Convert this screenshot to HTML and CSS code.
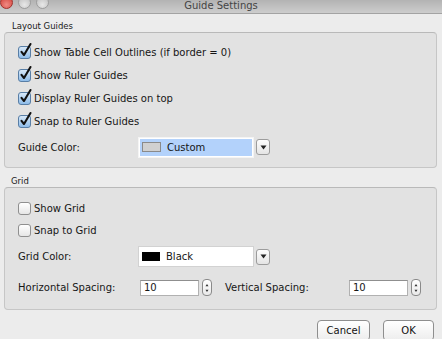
FILE: index.html
```html
<!DOCTYPE html>
<html>
<head>
<meta charset="utf-8">
<link rel="stylesheet" href="styles.css">
</head>
<body>
<div class="window">
  <div class="titlebar">
    <div class="lights">
      <span class="light red"></span>
      <span class="light"></span>
      <span class="light"></span>
    </div>
    <div class="title">Guide Settings</div>
    <div></div>
  </div>

  <div class="group-label">Layout Guides</div>
  <div class="panel panel-layout">
    <label class="row check-row"><span class="cb on"><svg viewBox="0 0 14 14" width="14" height="14"><path d="M3.5 6.8 L6 10 L12.5 -1" fill="none" stroke="#111" stroke-width="2.1" stroke-linecap="round" stroke-linejoin="round"/></svg></span>Show Table Cell Outlines (if border = 0)</label>
    <label class="row check-row"><span class="cb on"><svg viewBox="0 0 14 14" width="14" height="14"><path d="M3.5 6.8 L6 10 L12.5 -1" fill="none" stroke="#111" stroke-width="2.1" stroke-linecap="round" stroke-linejoin="round"/></svg></span>Show Ruler Guides</label>
    <label class="row check-row"><span class="cb on"><svg viewBox="0 0 14 14" width="14" height="14"><path d="M3.5 6.8 L6 10 L12.5 -1" fill="none" stroke="#111" stroke-width="2.1" stroke-linecap="round" stroke-linejoin="round"/></svg></span>Display Ruler Guides on top</label>
    <label class="row check-row"><span class="cb on"><svg viewBox="0 0 14 14" width="14" height="14"><path d="M3.5 6.8 L6 10 L12.5 -1" fill="none" stroke="#111" stroke-width="2.1" stroke-linecap="round" stroke-linejoin="round"/></svg></span>Snap to Ruler Guides</label>
    <div class="row color-row first-color">
      <span class="lbl">Guide Color:</span>
      <div class="field sel"><span class="inner"><span class="swatch custom"></span>Custom</span></div>
      <span class="popbtn"><svg viewBox="0 0 7 5" width="7" height="5"><path d="M0.5 0.5 H6.5 L3.5 4.5 Z" fill="#222"/></svg></span>
    </div>
  </div>

  <div class="group-label grid-label">Grid</div>
  <div class="panel panel-grid">
    <label class="row check-row short"><span class="cb"></span>Show Grid</label>
    <label class="row check-row short"><span class="cb"></span>Snap to Grid</label>
    <div class="row color-row grid-color">
      <span class="lbl">Grid Color:</span>
      <div class="field"><span class="inner"><span class="swatch black"></span>Black</span></div>
      <span class="popbtn"><svg viewBox="0 0 7 5" width="7" height="5"><path d="M0.5 0.5 H6.5 L3.5 4.5 Z" fill="#222"/></svg></span>
    </div>
    <div class="row spacing-row">
      <span class="lbl hlbl">Horizontal Spacing:</span>
      <span class="num">10</span>
      <span class="stepper"><svg viewBox="0 0 9 16" width="9" height="16"><path d="M2.8 6 L4.5 3.6 L6.2 6 Z M2.8 10 L4.5 12.4 L6.2 10 Z" fill="#333"/></svg></span>
      <span class="lbl vlbl">Vertical Spacing:</span>
      <span class="num">10</span>
      <span class="stepper"><svg viewBox="0 0 9 16" width="9" height="16"><path d="M2.8 6 L4.5 3.6 L6.2 6 Z M2.8 10 L4.5 12.4 L6.2 10 Z" fill="#333"/></svg></span>
    </div>
  </div>

  <div class="footer">
    <button class="btn cancel">Cancel</button>
    <button class="btn ok">OK</button>
  </div>
</div>
</body>
</html>
```

FILE: styles.css
```css
html, body {
  margin: 0;
  padding: 0;
  background: #ececec;
  overflow: hidden;
}
body {
  font-family: "DejaVu Sans", "Liberation Sans", sans-serif;
  font-size: 10px;
  color: #161616;
}
.window {
  width: 442px;
  height: 339px;
  overflow: hidden;
}
.titlebar {
  height: 13px;
  border-bottom: 1px solid #a3a3a3;
  background: linear-gradient(#b3b3b3, #cdcdcd);
  display: grid;
  grid-template-columns: 1fr auto 1fr;
  align-items: start;
  overflow: hidden;
}
.lights {
  display: flex;
  gap: 5px;
  margin-top: -4px;
}
.light {
  width: 11px;
  height: 11px;
  border-radius: 50%;
  border: 1px solid #9d9d9d;
  background: radial-gradient(circle at 50% 70%, #e8e8e8, #b9b9b9);
}
.light.red {
  border-color: #a0302b;
  background: radial-gradient(circle at 50% 70%, #f08b84, #cf3a32);
}
.title {
  font-size: 10px;
  line-height: 12px;
  color: #444;
  padding-top: 0;
}
.group-label {
  height: 12px;
  line-height: 12px;
  margin-top: 6px;
  padding-left: 12px;
  font-size: 8.5px;
  color: #1a1a1a;
}
.grid-label {
  margin-top: 7px;
  padding-left: 11px;
}
.panel {
  margin: 0 5px 0 4px;
  background: #e2e2e2;
  border: 1px solid #c6c6c6;
  border-top-color: #b9b9b9;
  border-radius: 4px;
  padding-left: 13px;
  display: flex;
  flex-direction: column;
}
.panel-layout {
  height: 133px;
  box-sizing: content-box;
  padding-top: 8px;
  height: 126px;
}
.panel-grid {
  padding-top: 9px;
  height: 112px;
}
.row {
  display: flex;
  align-items: center;
}
.check-row {
  height: 23px;
}
.check-row.short {
  height: 22px;
}
.cb {
  position: relative;
  width: 11px;
  height: 11px;
  margin-right: 3px;
  border: 1px solid #8f8f8f;
  border-radius: 3px;
  background: linear-gradient(#ffffff, #e6e6e6);
  flex: none;
}
.cb.on {
  border-color: #587ea6;
  background: linear-gradient(#d7e8f8, #8ebce9);
}
.cb svg {
  position: absolute;
  left: -1px;
  top: -2px;
  overflow: visible;
}
.color-row {
  height: 26px;
}
.first-color {
  margin-top: 1px;
}
.grid-color {
  margin-top: 2px;
  height: 27px;
}
.lbl {
  width: 120px;
  flex: none;
}
.field {
  width: 112px;
  height: 17px;
  border: 1px solid #d2d2d2;
  background: #fff;
  padding: 1px;
  display: flex;
}
.field.sel {
  border-color: #f4f4f4;
}
.field .inner {
  flex: 1;
  display: flex;
  align-items: center;
  padding-left: 2px;
  gap: 6px;
}
.field.sel .inner {
  background: #b3d2fb;
}
.swatch {
  width: 18px;
  height: 9px;
  flex: none;
}
.swatch.custom {
  background: #d0d0d0;
  border: 1px solid #8a8a8a;
  width: 17px;
  height: 8px;
}
.swatch.black {
  background: #000;
}
.popbtn {
  margin-left: 2px;
  width: 12px;
  height: 14px;
  border: 1px solid #9c9c9c;
  border-radius: 3px;
  background: linear-gradient(#fdfdfd, #e4e4e4);
  display: flex;
  align-items: center;
  justify-content: center;
}
.spacing-row {
  height: 27px;
  margin-top: 4px;
}
.hlbl {
  width: 122px;
}
.num {
  width: 54px;
  height: 14px;
  line-height: 14px;
  border: 1px solid #b1b1b1;
  border-top-color: #8f8f8f;
  background: #fff;
  padding-left: 3px;
  flex: none;
}
.stepper {
  margin-left: 3px;
  width: 8px;
  height: 15px;
  border: 1px solid #8a8a8a;
  border-radius: 4px;
  background: linear-gradient(#ffffff, #e9e9e9);
  display: flex;
  align-items: center;
  justify-content: center;
  overflow: hidden;
  flex: none;
}
.vlbl {
  margin-left: 13px;
  width: 124px;
}
.footer {
  display: flex;
  justify-content: flex-end;
  gap: 13px;
  padding-right: 8px;
  margin-top: 10px;
}
.btn {
  font-family: "DejaVu Sans", "Liberation Sans", sans-serif;
  font-size: 10px;
  color: #111;
  height: 21px;
  border: 1px solid #8e8e8e;
  border-radius: 4px;
  background: linear-gradient(#ffffff, #ededed);
  padding: 0;
}
.cancel {
  width: 53px;
}
.ok {
  width: 51px;
}
```
